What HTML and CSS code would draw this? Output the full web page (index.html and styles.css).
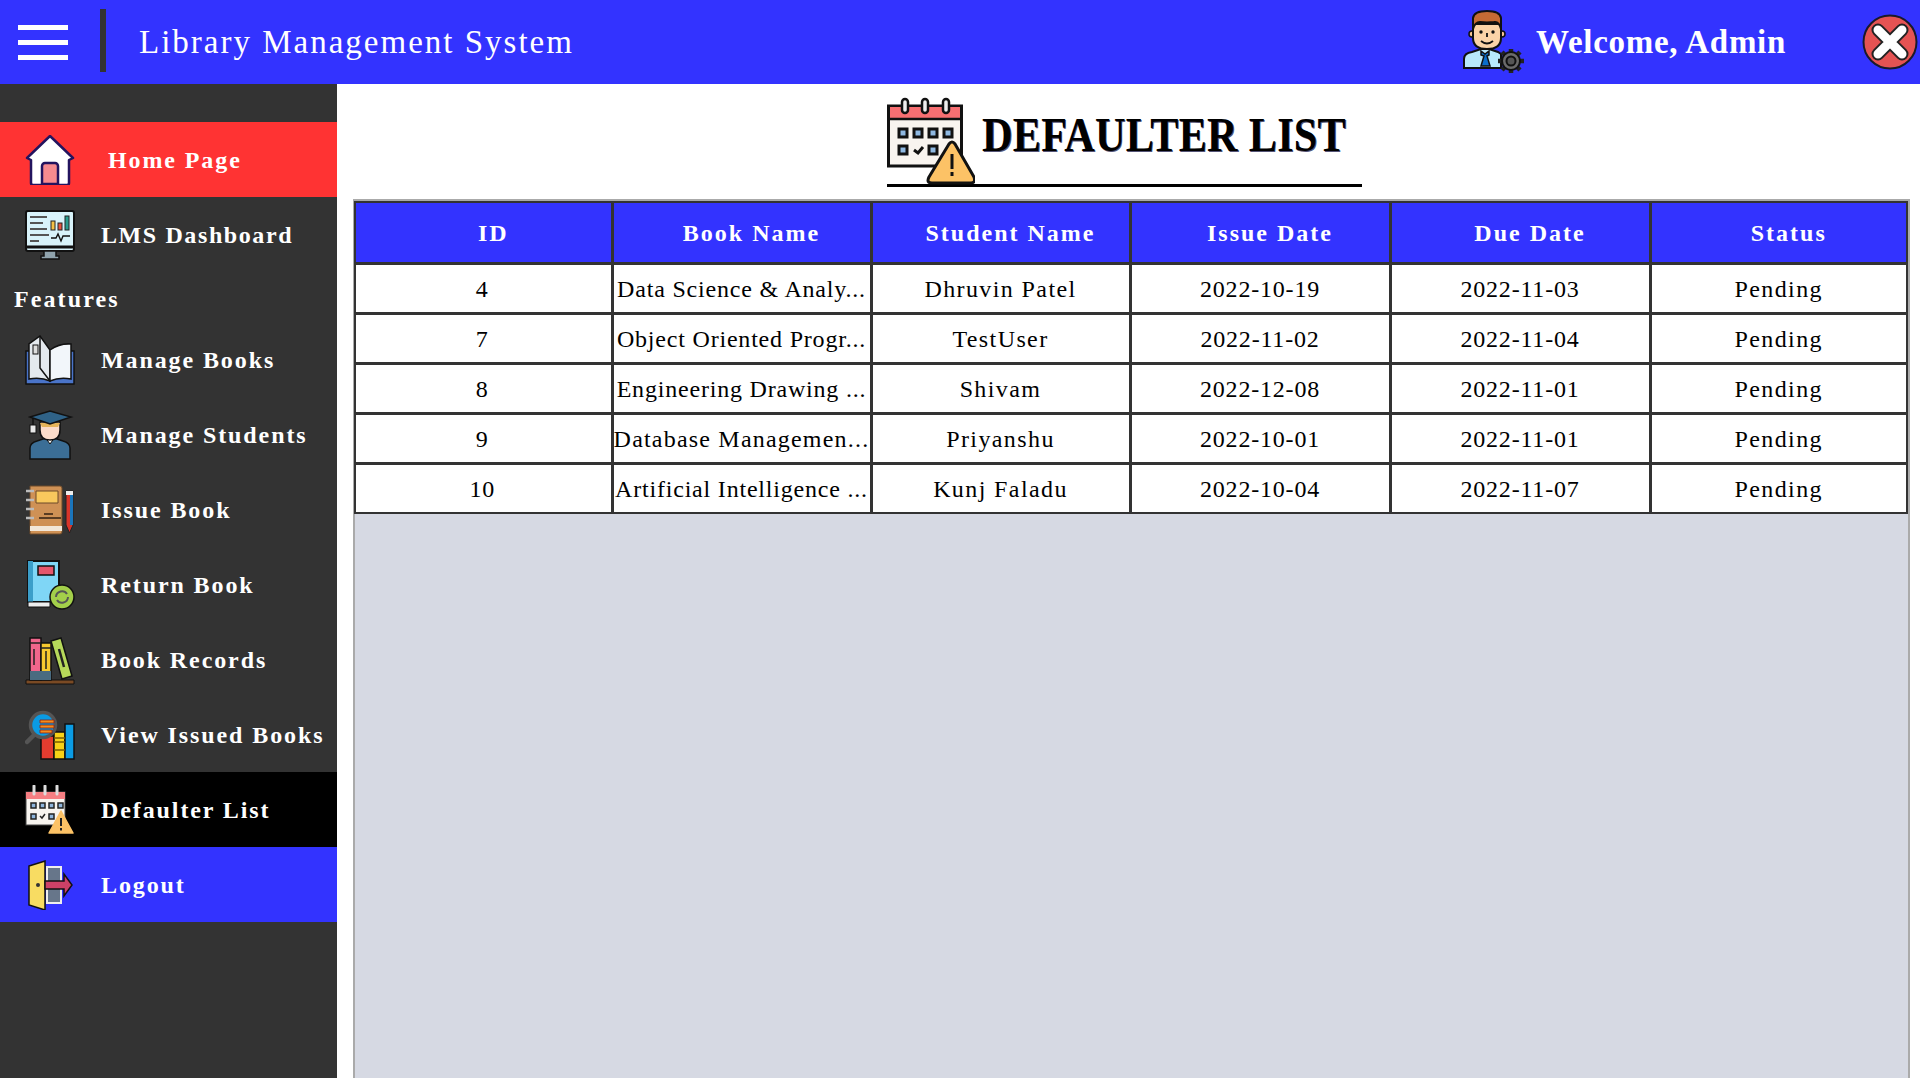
FILE: index.html
```html
<!DOCTYPE html>
<html lang="en">
<head>
	<meta charset="UTF-8">
	<title>Defaulter List</title>
	<link rel="stylesheet" href="styles.css">
</head>
<body>
	<header class="topbar">
		<div class="burger"><span></span><span></span><span></span></div>
		<div class="divider"></div>
		<div class="brand">Library Management System</div>
		<svg class="admin-icon" viewBox="0 0 64 64">
			<path d="M1 58V49q0-6 8-7l9-3h8l9 3 3 2v14z" fill="#b8e8fb" stroke="#111" stroke-width="2"/>
			<path d="M18 41l4 3 4-3v4l-2 1 3 10h-9l3-10-3-1z" fill="#0a6ecb" stroke="#111" stroke-width="1.5"/>
			<circle cx="9" cy="24" r="3" fill="#f6c493" stroke="#111" stroke-width="1.5"/>
			<circle cx="39" cy="24" r="3" fill="#f6c493" stroke="#111" stroke-width="1.5"/>
			<path d="M10 14v14q0 11 14 11t14-11V14z" fill="#fbd3a8" stroke="#111" stroke-width="2"/>
			<path d="M10 19V8q1-7 14-7t14 7v11q-2-8-7-7-7 1-14 0-5 0-7 7z" fill="#c56a35" stroke="#111" stroke-width="2"/>
			<circle cx="18" cy="22" r="1.7" fill="#111"/>
			<circle cx="30" cy="22" r="1.7" fill="#111"/>
			<path d="M24 23v4M18 31q6 5 12 0" fill="none" stroke="#111" stroke-width="1.8"/>
			<path d="M48 39v5M48 58v5M35 51h5M56 51h5M39 42l3 3M54 57l3 3M57 42l-3 3M42 57l-3 3" stroke="#222" stroke-width="4.500"/>
			<circle cx="48" cy="51" r="9" fill="#6b6b6b" stroke="#111" stroke-width="2"/>
			<circle cx="48" cy="51" r="4.500" fill="#555" stroke="#111" stroke-width="2"/>
		</svg>
		<div class="welcome">Welcome, Admin</div>
		<svg class="close-icon" viewBox="0 0 56 56">
			<circle cx="28" cy="28" r="26.5" fill="#e55353" stroke="#1a1a2a" stroke-width="2"/>
			<path d="M16 16L40 40M40 16L16 40" stroke="#222" stroke-width="13" stroke-linecap="round"/>
			<path d="M16 16L40 40M40 16L16 40" stroke="#fff" stroke-width="9" stroke-linecap="round"/>
		</svg>
	</header>

	<div class="layout">
		<nav class="sidebar">
			<a class="nav-item nav-home">
				<svg class="nav-icon" viewBox="0 0 50 50">
					<path d="M2 23L25 1l23 22-4 2v23a2 2 0 0 1-2 2H8a2 2 0 0 1-2-2V25z" fill="#fff" stroke="#23145f" stroke-width="2.5" stroke-linejoin="round"/>
					<path d="M17 49V31a3 3 0 0 1 3-3h10a3 3 0 0 1 3 3v18z" fill="#f78b8f" stroke="#23145f" stroke-width="2.5"/>
				</svg>
				<span>Home Page</span>
			</a>
			<a class="nav-item nav-dash">
				<svg class="nav-icon" viewBox="0 0 50 50">
					<rect x="1" y="1" width="48" height="40" rx="2" fill="#d8f3fa" stroke="#111" stroke-width="2"/>
					<path d="M1 37h48" stroke="#111" stroke-width="3"/>
					<path d="M5 7h17M5 13h13M5 19h17M5 25h19M5 31h9" stroke="#555" stroke-width="2.2"/>
					<rect x="26" y="11" width="4" height="9" fill="#f6c146" stroke="#222"/>
					<rect x="33" y="13" width="4" height="7" fill="#e5533f" stroke="#222"/>
					<rect x="40" y="6" width="4" height="14" fill="#2a9d8f" stroke="#222"/>
					<path d="M26 28h5l2-4 3 7 2-5h7" fill="none" stroke="#111" stroke-width="1.4"/>
					<path d="M19 41h12v5h3v3H16v-3h3z" fill="#8fa3ad" stroke="#111" stroke-width="1.5"/>
				</svg>
				<span>LMS Dashboard</span>
			</a>
			<div class="nav-title">Features</div>
			<a class="nav-item">
				<svg class="nav-icon" viewBox="0 0 50 50">
					<path d="M1 16h48v33H1z" fill="#4a74c9" stroke="#111" stroke-width="1.5"/>
					<path d="M4 44V9l11-8 10 14v31q-9-4-21-2z" fill="#e4e9ee" stroke="#111" stroke-width="1.5"/>
					<path d="M25 46V15q10-7 21-6v35q-12-2-21 2z" fill="#f2f6fa" stroke="#111" stroke-width="1.5"/>
					<path d="M15 1v32l10 13" fill="none" stroke="#111" stroke-width="1.5"/>
					<rect x="8" y="10" width="5" height="9" fill="#ddd" stroke="#111"/>
				</svg>
				<span>Manage Books</span>
			</a>
			<a class="nav-item">
				<svg class="nav-icon" viewBox="0 0 50 50">
					<path d="M5 49V38q0-5 7-7l9-3h8l9 3q7 2 7 7v11z" fill="#3b6e96" stroke="#111" stroke-width="1.5"/>
					<path d="M20 27l5 7 5-7z" fill="#fff" stroke="#111"/>
					<path d="M15 12h20v8q0 10-10 10T15 20z" fill="#fcdcca" stroke="#111" stroke-width="1.5"/>
					<path d="M15 13h20l-2 4H17z" fill="#e5b45a"/>
					<path d="M5 7L25 1l21 6-21 7z" fill="#2f6287" stroke="#111" stroke-width="1.5"/>
					<path d="M8 8v8" stroke="#111" stroke-width="1.5"/>
					<rect x="5" y="15" width="6" height="8" fill="#e8e8e8" stroke="#111"/>
				</svg>
				<span>Manage Students</span>
			</a>
			<a class="nav-item">
				<svg class="nav-icon" viewBox="0 0 50 50">
					<path d="M5 1h30a2 2 0 0 1 2 2v44a2 2 0 0 1-2 2H5z" fill="#cf9155" stroke="#6c4a2a"/>
					<path d="M5 41h32v5H5z" fill="#f2e7d8"/>
					<path d="M11 6h22v12H11z" fill="#f9c85d" stroke="#6c4a2a"/>
					<path d="M14 33h22M19 29h9" stroke="#5a3c22" stroke-width="1.800"/>
					<path d="M1 6h8M1 15h8M1 24h8M1 33h8" stroke="#bbb" stroke-width="2.400"/>
					<path d="M41 6h7v34l-3.500 8-3.500-8z" fill="#d9352a" stroke="#222"/>
					<path d="M45 6h3v34h-3z" fill="#1b75bb"/>
					<path d="M41 6h7v4h-7z" fill="#eee"/>
				</svg>
				<span>Issue Book</span>
			</a>
			<a class="nav-item">
				<svg class="nav-icon" viewBox="0 0 50 50">
					<path d="M3 1h31v41H3z" fill="#7fd6f6" stroke="#111" stroke-width="2"/>
					<path d="M3 1h5v41H3z" fill="#3b9ec9"/>
					<path d="M13 6h16v9H13z" fill="#e5566c" stroke="#111" stroke-width="1.5"/>
					<path d="M3 42h22v5H3z" fill="#eee" stroke="#111"/>
					<circle cx="37" cy="37" r="12" fill="#a3cf4a" stroke="#111" stroke-width="1.5"/>
					<path d="M31 37a6 6 0 0 1 11-3M43 37a6 6 0 0 1-11 3" fill="none" stroke="#555" stroke-width="2"/>
				</svg>
				<span>Return Book</span>
			</a>
			<a class="nav-item">
				<svg class="nav-icon" viewBox="0 0 50 50">
					<path d="M1 45h48v4H1z" fill="#7a4a24" stroke="#111"/>
					<rect x="5" y="3" width="11" height="42" fill="#f0668c" stroke="#111" stroke-width="1.5"/>
					<rect x="16" y="8" width="10" height="37" fill="#f7c92f" stroke="#111" stroke-width="1.5"/>
					<path d="M5 36h21v9H5z" fill="#4a6b80"/>
					<path d="M9 14v16M21 16v18M5 8h11M16 13h10" stroke="#222" stroke-width="1.5"/>
					<path d="M26 6l10-3 11 38-10 3z" fill="#b6d85a" stroke="#111" stroke-width="1.5"/>
					<path d="M34 14l5 18" stroke="#222" stroke-width="2.500"/>
				</svg>
				<span>Book Records</span>
			</a>
			<a class="nav-item">
				<svg class="nav-icon" viewBox="0 0 50 50">
					<rect x="16" y="26" width="13" height="23" fill="#e43c2f" stroke="#111" stroke-width="1.5"/>
					<rect x="29" y="22" width="11" height="27" fill="#f7d117" stroke="#111" stroke-width="1.5"/>
					<rect x="40" y="14" width="9" height="35" fill="#0b9be3" stroke="#111" stroke-width="1.5"/>
					<path d="M29 28h11M29 32h11M29 40h11" stroke="#7a5c00" stroke-width="1.5"/>
					<path d="M2 32l8-8" stroke="#555" stroke-width="4.500" stroke-linecap="round"/>
					<circle cx="18" cy="15" r="12.500" fill="#0a9be4" stroke="#555" stroke-width="3.500"/>
					<path d="M15 10h14v3H15zM15 15h14v3H15zM15 20h12v3H15z" fill="#f28c1c" stroke="#8a1f15" stroke-width=".8"/>
				</svg>
				<span>View Issued Books</span>
			</a>
			<a class="nav-item nav-current">
				<svg class="nav-icon" viewBox="0 0 50 50">
					<rect x="1" y="7" width="39" height="33" fill="#f7f4ef" stroke="#444"/>
					<path d="M1 7h39v7H1z" fill="#f57e82"/>
					<path d="M9 1v8M20 1v8M32 1v8" stroke="#ddd" stroke-width="3" stroke-linecap="round"/>
					<path d="M6 18h5v5H6zM15 18h5v5h-5zM24 18h5v5h-5zM33 18h5v5h-5zM6 29h5v5H6zM24 29h5v5h-5z" fill="#8fb5dc" stroke="#222" stroke-width="1.500"/>
					<path d="M15 31l2 2 3-4" fill="none" stroke="#222" stroke-width="1.500"/>
					<path d="M36 26L48 48H24z" fill="#fcc266" stroke="#fcc266" stroke-width="1.500" stroke-linejoin="round"/>
					<path d="M36 33v8M36 43v2.500" stroke="#222" stroke-width="2"/>
				</svg>
				<span>Defaulter List</span>
			</a>
			<a class="nav-item nav-logout">
				<svg class="nav-icon" viewBox="0 0 50 50">
					<path d="M22 7h14v36H22z" fill="#67768a" stroke="#eee" stroke-width="2"/>
					<path d="M4 6l16-5v49L4 45z" fill="#f8dc62" stroke="#111" stroke-width="1.500"/>
					<path d="M20 21h19v-7l8 11-8 11v-7H20z" fill="#cc4167" stroke="#111" stroke-width="1.500"/>
					<circle cx="13" cy="25" r="2" fill="#333"/>
				</svg>
				<span>Logout</span>
			</a>
		</nav>

		<main class="content">
			<div class="page-head">
				<svg class="head-icon" viewBox="0 0 88 88">
					<rect x="1.500" y="9" width="73" height="60" fill="#f8f4ef" stroke="#111" stroke-width="3"/>
					<rect x="3" y="10" width="70" height="11" fill="#f76f72"/>
					<path d="M2 22h72" stroke="#111" stroke-width="2.500"/>
					<rect x="15" y="2" width="6" height="14" rx="3" fill="#eee" stroke="#111" stroke-width="2.500"/>
					<rect x="35" y="2" width="6" height="14" rx="3" fill="#eee" stroke="#111" stroke-width="2.500"/>
					<rect x="56" y="2" width="6" height="14" rx="3" fill="#eee" stroke="#111" stroke-width="2.500"/>
					<path d="M12 32h8v8h-8zM27 32h8v8h-8zM42 32h8v8h-8zM57 32h8v8h-8zM12 49h8v8h-8zM42 49h8v8h-8z" fill="#8fb9e2" stroke="#111" stroke-width="3"/>
					<path d="M27 53l4 3 5-6" fill="none" stroke="#111" stroke-width="3"/>
					<path d="M62 47q3-4 6 0l19 33q2 6-3 6H45q-6 0-3-6z" fill="#fcc266" stroke="#111" stroke-width="3" stroke-linejoin="round"/>
					<path d="M65 57v15M65 75v4" stroke="#111" stroke-width="3"/>
				</svg>
				<h1 class="page-title">DEFAULTER LIST</h1>
			</div>

			<div class="table-box">
				<table class="book-table">
					<thead>
						<tr><th>ID</th><th>Book Name</th><th>Student Name</th><th>Issue Date</th><th>Due Date</th><th>Status</th></tr>
					</thead>
					<tbody>
						<tr><td class="c-id">4</td><td class="c-name">Data Science &amp; Analy...</td><td class="c-wide">Dhruvin Patel</td><td>2022-10-19</td><td>2022-11-03</td><td class="c-wide">Pending</td></tr>
						<tr><td class="c-id">7</td><td class="c-name">Object Oriented Progr...</td><td class="c-wide">TestUser</td><td>2022-11-02</td><td>2022-11-04</td><td class="c-wide">Pending</td></tr>
						<tr><td class="c-id">8</td><td class="c-name">Engineering Drawing ...</td><td class="c-wide">Shivam</td><td>2022-12-08</td><td>2022-11-01</td><td class="c-wide">Pending</td></tr>
						<tr><td class="c-id">9</td><td class="c-name c-db">Database Managemen...</td><td class="c-wide">Priyanshu</td><td>2022-10-01</td><td>2022-11-01</td><td class="c-wide">Pending</td></tr>
						<tr><td class="c-id">10</td><td class="c-name">Artificial Intelligence ...</td><td class="c-wide">Kunj Faladu</td><td>2022-10-04</td><td>2022-11-07</td><td class="c-wide">Pending</td></tr>
					</tbody>
				</table>
			</div>
		</main>
	</div>
</body>
</html>
```

FILE: styles.css
```css
* {box-sizing: border-box;}
body {margin: 0; height: 1078px; overflow: hidden; display: flex; flex-direction: column; font-family: "Liberation Serif", "DejaVu Serif", serif; background: #fff;}

.topbar {height: 84px; flex: none; display: flex; align-items: center; background: #3333ff; color: #fff;}
.burger {width: 50px; margin-left: 18px; display: flex; flex-direction: column; gap: 10px;}
.burger span {display: block; height: 5px; background: #fff;}
.divider {width: 6px; height: 63px; margin: -3px 0 0 32px; background: #333;}
.brand {margin-left: 33px; font-size: 33px; letter-spacing: 2px;}
.admin-icon {width: 64px; height: 64px; margin-left: auto;}
.welcome {margin-left: 9px; font-size: 33px; font-weight: bold; letter-spacing: 0.7px;}
.close-icon {width: 56px; height: 56px; margin-left: 76px; margin-right: 2px;}

.layout {flex: 1; display: flex; min-height: 0;}

.sidebar {width: 337px; flex: none; padding-top: 38px; background: #333; color: #fff;}
.nav-item {height: 75px; display: flex; align-items: center; padding-left: 25px; font-size: 24px; font-weight: bold; letter-spacing: 1.9px;}
.nav-item span {padding-top: 2px;}
.nav-icon {width: 50px; height: 50px; flex: none; margin-right: 26px;}
.nav-home {background: #ff3333;}
.nav-home .nav-icon {margin-right: 33px;}
.nav-dash {letter-spacing: 1.6px;}
.nav-current {background: #000;}
.nav-logout {background: #3333ff;}
.nav-title {height: 50px; padding: 14px 0 0 14px; font-size: 24px; font-weight: bold; letter-spacing: 2.1px;}

.content {flex: 1; min-width: 0; display: flex; flex-direction: column; padding: 0 10px 0 16px;}
.page-head {width: 475px; height: 90px; margin: 13px 0 0 534px; flex: none; display: flex; align-items: flex-start; border-bottom: 3px solid #000;}
.head-icon {width: 88px; height: 88px; flex: none;}
.page-title {margin: 10px 0 0 7px; font-size: 48px; font-weight: bold; letter-spacing: 0.3px; white-space: nowrap; color: #000; text-shadow: 1px 1px 0 #557; transform: scaleX(.88); transform-origin: left center;}

.table-box {flex: 1; margin-top: 12px; background: #d6d9e3; border: 2px solid #aaa; border-bottom: 0;}
.book-table {width: calc(100% + 1px); margin-left: -1px; border-collapse: collapse; table-layout: fixed; background: #fff; font-size: 24px;}
.book-table th {width: 259px; height: 61px; padding: 2px 0 0 20px; border: 3px solid #333; border-top-width: 2px; background: #3333ff; color: #fff; font-weight: bold; letter-spacing: 2px;}
.book-table th:first-child {width: 257px;}
.book-table th:nth-child(4) {width: 260px;}
.book-table th:nth-child(5) {width: 260px;}
.book-table th:last-child {width: auto;}
.book-table td {height: 50px; padding: 2px 0 0; border: 3px solid #333; text-align: center; color: #000; letter-spacing: 0.8px;}
.book-table th:first-child, .book-table td:first-child {border-left-width: 2px;}
.book-table th:last-child, .book-table td:last-child {border-right-width: 2px;}
.book-table tr:last-child td {border-bottom-width: 2px;}
.book-table .c-id {padding-right: 2px;}
.book-table .c-name {white-space: nowrap; overflow: hidden;}
.book-table .c-db {letter-spacing: 1.2px;}
.book-table .c-wide {letter-spacing: 1.4px;}
```
